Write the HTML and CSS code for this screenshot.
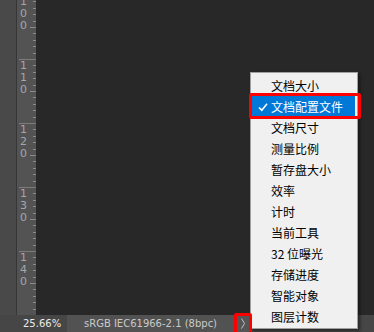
FILE: index.html
```html
<!DOCTYPE html>
<html lang="zh-CN">
<head>
<meta charset="utf-8">
<title>Photoshop 状态栏菜单</title>
<link rel="stylesheet" href="styles.css">
</head>
<body>
<div class="app">
  <div class="main">
    <div class="panel"></div>
    <div class="ruler">
      <div class="seg first"><span>1</span><span>0</span><span>0</span></div>
      <div class="seg"><span>1</span><span>1</span><span>0</span></div>
      <div class="seg"><span>1</span><span>2</span><span>0</span></div>
      <div class="seg"><span>1</span><span>3</span><span>0</span></div>
      <div class="seg"><span>1</span><span>4</span><span>0</span></div>
    </div>
    <div class="canvas"></div>
  </div>
  <div class="status">
    <div class="zoom">25.66%</div>
    <div class="info">sRGB IEC61966-2.1 (8bpc)</div>
    <div class="btn">
      <svg width="18" height="17" viewBox="0 0 18 17"><polyline points="7.5,3.5 10.5,8.5 7.5,13.5" fill="none" stroke="#c4c4c4" stroke-width="1"/></svg>
    </div>
    <div class="rest"></div>
  </div>

  <ul class="menu">
    <li>文档大小</li>
    <li class="sel"><svg class="check" width="10" height="10" viewBox="0 0 10 10"><polyline points="1,5.5 3.8,8.2 9,1.8" fill="none" stroke="#fff" stroke-width="1.6"/></svg>文档配置文件</li>
    <li>文档尺寸</li>
    <li>测量比例</li>
    <li>暂存盘大小</li>
    <li>效率</li>
    <li>计时</li>
    <li>当前工具</li>
    <li>32 位曝光</li>
    <li>存储进度</li>
    <li>智能对象</li>
    <li>图层计数</li>
  </ul>

  <div class="mark mark-item"></div>
  <div class="mark mark-btn"></div>
</div>
</body>
</html>
```

FILE: styles.css
```css
* { box-sizing: border-box; }
html, body { margin: 0; padding: 0; }
body {
  width: 374px;
  height: 332px;
  overflow: hidden;
  background: #282828;
  font-family: "DejaVu Sans", sans-serif;
}
.app {
  position: relative;
  width: 374px;
  height: 332px;
  display: flex;
  flex-direction: column;
}
.main {
  flex: 1;
  display: flex;
  min-height: 0;
}
.panel {
  width: 17px;
  background: #494949;
  border-right: 1px solid #363636;
}
.ruler {
  width: 19px;
  background: #535353;
  display: flex;
  flex-direction: column;
  overflow: hidden;
}
.seg {
  flex: none;
  height: 64px;
  padding: 0 0 0 3px;
  display: flex;
  flex-direction: column;
  background:
    linear-gradient(#7c7c7c, #7c7c7c) left 2px top 0 / 17px 1px no-repeat,
    linear-gradient(#8a8a8a, #8a8a8a) right 0 top 32px / 6px 1px no-repeat,
    repeating-linear-gradient(to bottom, #8a8a8a 0 1px, transparent 1px 6.4px) right 0 top 0 / 3px 100% no-repeat;
  background-color: #535353;
  padding-top: 1px;
}
.seg.first { margin-top: -5px; }
.seg span {
  font-size: 11px;
  line-height: 12px;
  color: #a2a7ad;
  height: 12px;
}
.canvas {
  flex: 1;
  background: #282828;
}
.status {
  height: 17px;
  display: flex;
  font-size: 10px;
  line-height: 17px;
}
.zoom {
  width: 67px;
  background: #464646;
  color: #ececec;
  padding-left: 23px;
  white-space: nowrap;
}
.info {
  width: 167px;
  background: #525252;
  color: #cacaca;
  text-align: center;
  white-space: nowrap;
}
.btn {
  width: 18px;
  background: #555555;
  display: flex;
}
.rest {
  flex: 1;
  background: #464646;
}
.menu {
  position: absolute;
  left: 250px;
  top: 72px;
  width: 108px;
  height: 257px;
  margin: 0;
  padding: 2px 1px;
  list-style: none;
  background: #f0f0f0;
  border: 1px solid #a0a0a0;
  box-shadow: 2px 2px 3px rgba(0, 0, 0, 0.45);
  font-family: "Noto Sans CJK SC", sans-serif;
  font-size: 12px;
}
.menu li {
  height: 21px;
  line-height: 21px;
  padding-left: 19px;
  margin-right: 1px;
  color: #000;
  white-space: nowrap;
  display: flex;
  align-items: center;
}
.menu li.sel {
  background: #0078d7;
  color: #fff;
  padding-left: 6px;
}
.check {
  margin-right: 3px;
  flex: none;
}
.mark {
  position: absolute;
  border: 3px solid #ff0000;
  border-radius: 2px;
}
.mark-item {
  left: 249px;
  top: 93px;
  width: 112px;
  height: 26px;
}
.mark-btn {
  left: 234px;
  top: 313px;
  width: 18px;
  height: 22px;
}
```
